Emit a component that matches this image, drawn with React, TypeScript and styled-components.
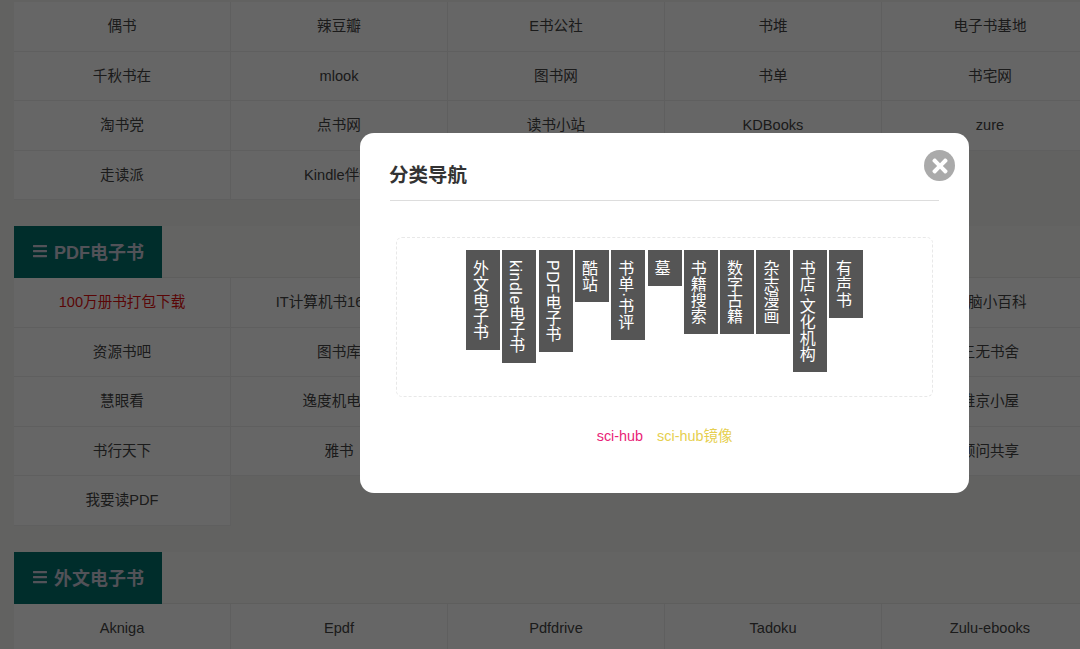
import React from 'react';
import styled, {createGlobalStyle} from 'styled-components';
import {FaBars, FaTimes} from 'react-icons/fa';

const GlobalStyle = createGlobalStyle`
  html, body {
    margin: 0;
    height: 100%;
    overflow: hidden;
    background: #f4f4f2;
    color: #333;
    font-family: "Liberation Sans", "Noto Sans CJK SC", sans-serif;
    font-size: 14.6px;
  }
`;

const Page = styled.main`
  width: 1085px;
  padding: 2px 0 0 14px;
`;

const Section = styled.section`
  margin-bottom: 26px;
`;

const SectionBar = styled.div`
  height: 51px;
  background: #f9f9f7;
  border-bottom: 1px solid #ebebe9;
`;

const SectionTitle = styled.h2`
  box-sizing: border-box;
  margin: 0;
  width: 148px;
  height: 52px;
  padding-bottom: 2px;
  display: flex;
  align-items: center;
  justify-content: center;
  gap: 6px;
  background: #00706c;
  color: #ccd;
  font-size: 18px;
  font-weight: 700;
  svg {
    width: 16px;
    height: 16px;
  }
`;

const Grid = styled.div`
  display: grid;
  grid-template-columns: repeat(5, 217px);
  grid-auto-rows: 49.5px;
`;

const Cell = styled.a<{$hot?: boolean}>`
  display: flex;
  align-items: center;
  justify-content: center;
  box-sizing: border-box;
  background: #fff;
  border-right: 1px solid #eee;
  border-bottom: 1px solid #eee;
  color: ${p => (p.$hot ? '#e01010' : '#444')};
  line-height: 20px;
  white-space: nowrap;
`;

const Overlay = styled.div`
  position: fixed;
  inset: 0;
  padding-top: 133px;
  padding-left: 360px;
  background: rgba(0, 0, 0, 0.6);
`;

const Modal = styled.div`
  position: relative;
  box-sizing: border-box;
  width: 609px;
  height: 360px;
  padding: 30px;
  background: #fff;
  border-radius: 14px;
`;

const ModalTitle = styled.h3`
  margin: 0;
  height: 37px;
  border-bottom: 1px solid #ddd;
  color: #333;
  font-size: 19.5px;
  font-weight: 700;
  line-height: 24px;
  text-indent: -1px;
`;

const CloseButton = styled.button`
  position: absolute;
  top: 17px;
  right: 14px;
  width: 31px;
  height: 31px;
  padding: 0;
  display: flex;
  align-items: center;
  justify-content: center;
  border: 0;
  border-radius: 50%;
  background: #aaa;
  color: #fff;
  svg {
    width: 22px;
    height: 22px;
  }
`;

const TabBox = styled.div`
  box-sizing: border-box;
  margin: 36px 0 0 6px;
  width: 537px;
  height: 160px;
  padding-top: 12px;
  display: flex;
  align-items: flex-start;
  justify-content: center;
  gap: 2.3px;
  border: 1px dashed #e8e8e8;
  border-radius: 6px;
`;

const Tab = styled.a`
  box-sizing: border-box;
  width: 34px;
  padding: 10px 10px 10px 2px;
  background: #555;
  color: #fff;
  font-size: 16px;
  line-height: 22px;
  writing-mode: vertical-lr;
`;

const TabLatin = styled.span`
  letter-spacing: 0.5px;
`;

const Links = styled.div`
  margin-top: 29px;
  display: flex;
  justify-content: center;
  gap: 14px;
  font-size: 14.4px;
  line-height: 20px;
`;

const SubLink = styled.a<{$color: string}>`
  color: ${p => p.$color};
`;

const sections = [
    {
        cells: ['偶书', '辣豆瓣', 'E书公社', '书堆', '电子书基地', '千秋书在', 'mlook', '图书网', '书单', '书宅网', '淘书党', '点书网', '读书小站', 'KDBooks', 'zure', '走读派', 'Kindle伴侣']
    },
    {
        title: 'PDF电子书',
        cells: ['100万册书打包下载', 'IT计算机书16000本', '', '', '电脑小百科', '资源书吧', '图书库', '', '', '三无书舍', '慧眼看', '逸度机电书', '', '', '维京小屋', '书行天下', '雅书', '', '', '顾问共享', '我要读PDF']
    },
    {
        title: '外文电子书',
        cells: ['Akniga', 'Epdf', 'Pdfdrive', 'Tadoku', 'Zulu-ebooks']
    }
];

const tabs = ['外文电子书', 'kindle电子书', 'PDF电子书', '酷站', '书单·书评', '墓', '书籍搜索', '数字古籍', '杂志漫画', '书店·文化机构', '有声书'];

function tabLabel(text: string) {
    return text.split(/([A-Za-z·]+)/).map((part, i) =>
        i % 2 ? <TabLatin key={i}>{part}</TabLatin> : part
    );
}

export default function App() {
    return (
        <>
            <GlobalStyle/>
            <Page>
                {sections.map((s, i) => (
                    <Section key={i}>
                        {s.title && (
                            <SectionBar>
                                <SectionTitle><FaBars/>{s.title}</SectionTitle>
                            </SectionBar>
                        )}
                        <Grid>
                            {s.cells.map((c, j) => <Cell key={j} $hot={c.startsWith('100万')}>{c}</Cell>)}
                        </Grid>
                    </Section>
                ))}
            </Page>
            <Overlay>
                <Modal>
                    <ModalTitle>分类导航</ModalTitle>
                    <CloseButton><FaTimes/></CloseButton>
                    <TabBox>
                        {tabs.map(t => <Tab key={t}>{tabLabel(t)}</Tab>)}
                    </TabBox>
                    <Links>
                        <SubLink $color="#e91e78">sci-hub</SubLink>
                        <SubLink $color="#e6cf4f">sci-hub镜像</SubLink>
                    </Links>
                </Modal>
            </Overlay>
        </>
    );
}
